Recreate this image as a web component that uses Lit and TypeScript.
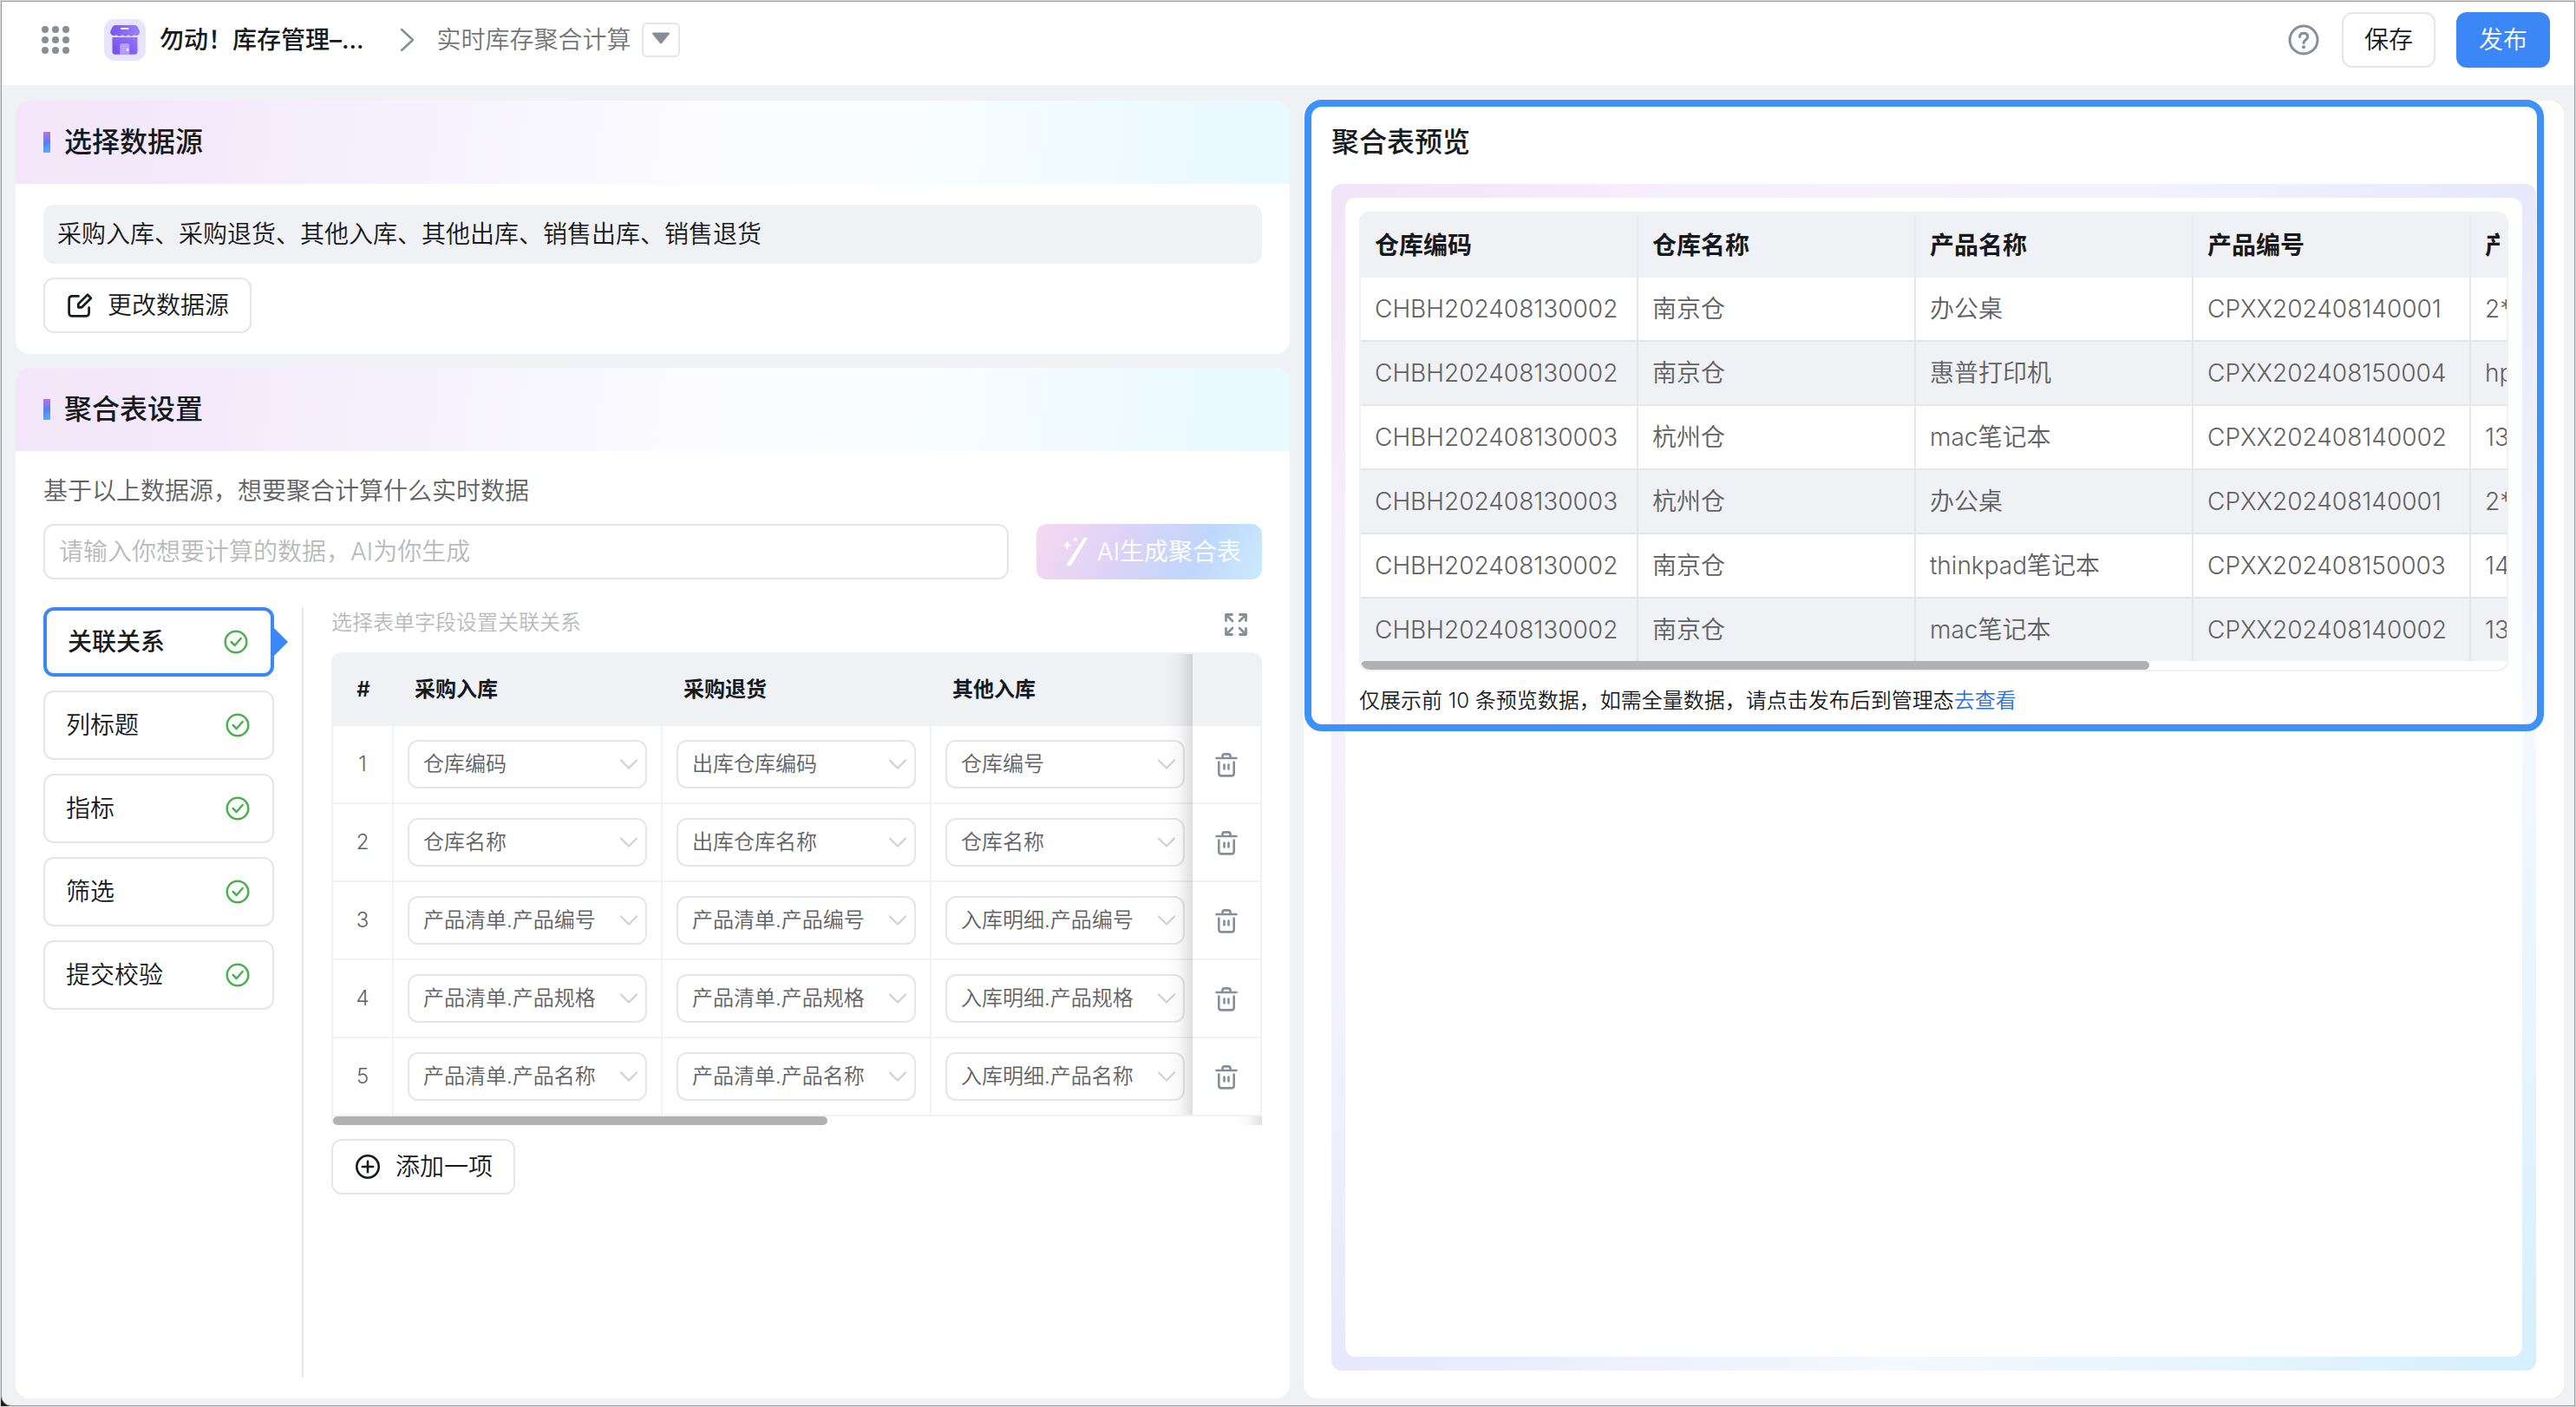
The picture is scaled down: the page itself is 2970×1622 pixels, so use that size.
import { LitElement, html, css, svg } from "lit";
import { customElement, state } from "lit/decorators.js";
import { classMap } from "lit/directives/class-map.js";

const SOURCES = ["采购入库", "采购退货", "其他入库"];

const RELATIONS: string[][] = [
  ["仓库编码", "出库仓库编码", "仓库编号"],
  ["仓库名称", "出库仓库名称", "仓库名称"],
  ["产品清单.产品编号", "产品清单.产品编号", "入库明细.产品编号"],
  ["产品清单.产品规格", "产品清单.产品规格", "入库明细.产品规格"],
  ["产品清单.产品名称", "产品清单.产品名称", "入库明细.产品名称"],
];

const STEPS = ["关联关系", "列标题", "指标", "筛选", "提交校验"];

const PREVIEW_HEAD = ["仓库编码", "仓库名称", "产品名称", "产品编号", "产"];

const PREVIEW_ROWS: string[][] = [
  ["CHBH202408130002", "南京仓", "办公桌", "CPXX202408140001", "2*"],
  ["CHBH202408130002", "南京仓", "惠普打印机", "CPXX202408150004", "hp"],
  ["CHBH202408130003", "杭州仓", "mac笔记本", "CPXX202408140002", "13"],
  ["CHBH202408130003", "杭州仓", "办公桌", "CPXX202408140001", "2*"],
  ["CHBH202408130002", "南京仓", "thinkpad笔记本", "CPXX202408150003", "14"],
  ["CHBH202408130002", "南京仓", "mac笔记本", "CPXX202408140002", "13"],
];

const shared = css`
  * {
    box-sizing: border-box;
  }
  button,
  select,
  input {
    font: inherit;
    color: inherit;
    margin: 0;
  }
  button {
    cursor: pointer;
  }
  svg {
    display: block;
    flex: none;
  }
  h2 {
    margin: 0;
    font-size: 32px;
    line-height: 48px;
    font-weight: 500;
  }
  table {
    border-collapse: separate;
    border-spacing: 0;
    table-layout: fixed;
    width: 100%;
  }
  .btn {
    display: inline-flex;
    align-items: center;
    justify-content: center;
    height: 64px;
    padding: 0 24px;
    border: 2px solid #e6e6e6;
    border-radius: 12px;
    background: #fff;
    font-size: 28px;
    line-height: 40px;
    color: #171a1d;
    white-space: nowrap;
  }
  .icon-btn {
    display: inline-flex;
    padding: 0;
    border: 0;
    background: none;
    vertical-align: middle;
  }
`;

const gridIcon = html`<svg width="32" height="32" viewBox="0 0 32 32" fill="#878f96" aria-hidden="true">
  ${[4, 16, 28].map((y) => [4, 16, 28].map((x) => svg`<circle cx=${x} cy=${y} r="4"></circle>`))}
</svg>`;

const storeIcon = html`<svg width="48" height="48" viewBox="0 0 48 48" aria-hidden="true">
  <defs>
    <linearGradient id="awning" x1="0" y1="0" x2="1" y2="0">
      <stop offset="0" stop-color="#7a55f2"></stop>
      <stop offset="1" stop-color="#9a80fa"></stop>
    </linearGradient>
    <linearGradient id="wall" x1="1" y1="0" x2="0" y2="1">
      <stop offset="0" stop-color="#9479f8"></stop>
      <stop offset="1" stop-color="#7349ee"></stop>
    </linearGradient>
  </defs>
  <rect width="48" height="48" rx="12" fill="#e7e4fc"></rect>
  <path d="M9.500 21H38.500V37.500Q38.500 40.700 35 40.700H13Q9.500 40.700 9.500 37.500Z" fill="url(#wall)"></path>
  <path
    d="M13 7H35.500Q37.500 7 38.500 8.800L40.800 13.500Q42 16 39.800 18Q37.500 20 34.700 18.200Q31.200 21.400 28 18.200Q24.500 21.400 21 18.200Q17.500 21.400 14 18.200Q11 20.200 8.500 18Q6.300 16 7.500 13.500L9.800 8.800Q10.800 7 13 7Z"
    fill="url(#awning)"
  ></path>
  <path
    d="M10 19.800Q12 20.600 14 19Q17.500 22.200 21 19Q24.500 22.200 28 19Q31.200 22.200 34.700 19Q36.500 20.600 38.500 19.800"
    fill="none" stroke="#d9d0fd" stroke-width="1"
  ></path>
  <rect x="19.300" y="10" width="9" height="2" rx="0.500" fill="#fff"></rect>
  <path d="M18.300 40.700V31Q18.300 28 21.300 28H26.300Q29.300 28 29.300 31V40.700Z" fill="#b3a0fb"></path>
  <rect x="26.300" y="33.500" width="1.700" height="3.500" rx="0.800" fill="#fff"></rect>
</svg>`;

const editIcon = html`<svg width="32" height="32" viewBox="0 0 32 32" fill="none" stroke="#171a1d" stroke-width="2.700" stroke-linejoin="round" stroke-linecap="round" aria-hidden="true">
  <path d="M14.500 5.400H7.500Q3.600 5.400 3.600 9.300V24.500Q3.600 28.400 7.500 28.400H22.500Q26.600 28.400 26.600 24.500V18.500"></path>
  <path d="M25 3.800L28.900 7.700L18.300 18.300H14.300V14.400Z"></path>
</svg>`;

const plusIcon = html`<svg width="32" height="32" viewBox="0 0 32 32" fill="none" stroke="#171a1d" stroke-width="2.600" stroke-linecap="round" aria-hidden="true">
  <circle cx="16" cy="16" r="12.700"></circle>
  <path d="M16 9.800V22.200M9.800 16H22.200"></path>
</svg>`;

const checkIcon = html`<svg width="32" height="32" viewBox="0 0 32 32" fill="none" stroke="#4caf50" stroke-width="2.500" stroke-linecap="round" stroke-linejoin="round" aria-hidden="true">
  <circle cx="16" cy="16" r="12.300"></circle>
  <path d="M10.700 16L14.700 20L21.700 12"></path>
</svg>`;

const wandIcon = html`<svg width="36" height="36" viewBox="0 -1 36 36" fill="#fff" aria-hidden="true">
  <path d="M8.800 31.500L28.300 1.500Q28.800 0.700 29.800 0.700H31.500Q33 0.700 32.200 2.200L14.400 32Q13.800 33 12.600 33H10Q7.800 33 8.800 31.500Z"></path>
  <path d="M9.500 4.300Q10.400 8.700 14.800 9.600Q10.400 10.500 9.500 14.900Q8.600 10.500 4.200 9.600Q8.600 8.700 9.500 4.300Z"></path>
  <path d="M19 0Q19.500 2.500 22 3Q19.500 3.500 19 6Q18.500 3.500 16 3Q18.500 2.500 19 0Z"></path>
</svg>`;

const expandIcon = html`<svg width="32" height="32" viewBox="0 0 32 32" fill="none" stroke="#878f96" stroke-width="2.800" stroke-linecap="round" stroke-linejoin="round" aria-hidden="true">
  <path d="M11.500 4.500H4.500V11.500M4.500 4.500L12 12M20.500 4.500H27.500V11.500M27.500 4.500L20 12M4.500 20.500V27.500H11.500M4.500 27.500L12 20M27.500 20.500V27.500H20.500M27.500 27.500L20 20"></path>
</svg>`;

const trashIcon = html`<svg width="32" height="32" viewBox="0 0 32 32" fill="none" stroke="#878f96" stroke-width="2.600" stroke-linecap="round" stroke-linejoin="round" aria-hidden="true">
  <path d="M4.500 8H27.500M11.500 8V5.600Q11.500 3.400 13.700 3.400H18.300Q20.500 3.400 20.500 5.600V8"></path>
  <path d="M7.300 12.500V25.500Q7.300 28.400 10.200 28.400H21.800Q24.700 28.400 24.700 25.500V12.500M13.500 15.500V20.500M18.500 15.500V20.500"></path>
</svg>`;

const helpIcon = html`<svg width="40" height="40" viewBox="-2 -2 40 40" fill="none" stroke="#878f96" stroke-width="3" stroke-linecap="round" aria-hidden="true">
  <circle cx="18" cy="18" r="16"></circle>
  <path d="M13.500 14.500Q13.500 10.300 18 10.300Q22.700 10.300 22.700 14.300Q22.700 16.300 20.300 18Q18 19.600 18 21.500"></path>
  <circle cx="18" cy="26.300" r="2" fill="#878f96" stroke="none"></circle>
</svg>`;

@customElement("top-bar")
class TopBar extends LitElement {
  static styles = [
    shared,
    css`
      :host {
        display: block;
        background: #fff;
      }
      .bar {
        display: flex;
        align-items: center;
        justify-content: space-between;
        height: 96px;
        padding: 0 28px 8px 46px;
      }
      .crumbs,
      .actions {
        display: flex;
        align-items: center;
      }
      .logo {
        margin: 0 16px 0 40px;
      }
      .app-name {
        font-size: 28px;
        line-height: 40px;
        font-weight: 500;
        color: #171a1d;
      }
      .arrow {
        margin: 0 24px 0 40px;
      }
      .page-name {
        font-size: 28px;
        line-height: 40px;
        color: #747677;
      }
      .menu {
        display: inline-flex;
        align-items: center;
        justify-content: center;
        width: 44px;
        height: 40px;
        margin-left: 12px;
        padding: 0 0 4px;
        border: 2px solid #e6e6e6;
        border-radius: 6px;
        background: #fff;
      }
      .actions {
        gap: 24px;
      }
      .primary {
        border-color: #3c87f7;
        background: #3c87f7;
        color: #fff;
      }
    `,
  ];

  render() {
    return html`<header class="bar">
      <div class="crumbs">
        <button class="icon-btn" aria-label="应用">${gridIcon}</button>
        <span class="logo">${storeIcon}</span>
        <span class="app-name">勿动！库存管理–…</span>
        <svg class="arrow" width="20" height="28" viewBox="0 0 20 28" fill="none" stroke="#878f96" stroke-width="2.500" stroke-linecap="round" stroke-linejoin="round" aria-hidden="true">
          <path d="M3 2L16 14L3 26"></path>
        </svg>
        <span class="page-name">实时库存聚合计算</span>
        <button class="menu" aria-label="切换">
          <svg width="22" height="14" viewBox="0 0 22 14" aria-hidden="true">
            <path d="M2.500 0.500H19.500Q22 0.500 20.500 2.600L12.500 12.500Q11 14 9.500 12.500L1.500 2.600Q0 0.500 2.500 0.500Z" fill="#878f96"></path>
          </svg>
        </button>
      </div>
      <div class="actions">
        <button class="icon-btn" aria-label="帮助">${helpIcon}</button>
        <button class="btn">保存</button>
        <button class="btn primary">发布</button>
      </div>
    </header>`;
  }
}

@customElement("relation-table")
class RelationTable extends LitElement {
  static styles = [
    shared,
    css`
      :host {
        display: block;
      }
      .wrap {
        position: relative;
        border-left: 2px solid #f0f1f4;
        border-radius: 12px 12px 0 0;
        overflow: hidden;
      }
      .c-index {
        width: 70px;
      }
      .c-source {
        width: 310px;
      }
      .c-action {
        width: 80px;
      }
      th {
        height: 85px;
        padding: 0 24px;
        background: #f0f1f4;
        font-size: 24px;
        line-height: 36px;
        font-weight: 600;
        text-align: left;
        color: #171a1d;
      }
      th.index {
        padding: 0;
        text-align: center;
      }
      td {
        height: 90px;
        padding: 0 0 0 16px;
        border-right: 2px solid #f1f2f3;
        border-bottom: 2px solid #f1f2f3;
        font-size: 24px;
        line-height: 36px;
        color: #5f6163;
      }
      td.last {
        border-right: 0;
      }
      td.index,
      td.action {
        padding: 0;
        text-align: center;
      }
      .picker {
        display: grid;
        align-items: center;
        width: 276px;
      }
      .picker > * {
        grid-area: 1 / 1;
      }
      .picker svg {
        justify-self: end;
        margin-right: 10px;
        pointer-events: none;
      }
      select {
        appearance: none;
        width: 100%;
        height: 56px;
        padding: 0 40px 0 16px;
        border: 2px solid #e6e6e6;
        border-radius: 12px;
        background: #fff;
      }
      .shade {
        position: absolute;
        top: 2px;
        bottom: 12px;
        right: 80px;
        width: 30px;
        background: linear-gradient(90deg, transparent, rgba(0, 0, 0, 0.03) 50%, rgba(0, 0, 0, 0.13));
        pointer-events: none;
      }
      .track {
        display: flex;
        justify-content: space-between;
        height: 10px;
      }
      .thumb {
        width: 53.2%;
        border-radius: 5px;
        background: #b1b1b1;
      }
      .track-end {
        width: 30px;
        background: linear-gradient(90deg, transparent, rgba(0, 0, 0, 0.03) 50%, rgba(0, 0, 0, 0.13));
      }
    `,
  ];

  render() {
    return html`<div class="wrap">
      <table>
        <colgroup>
          <col class="c-index" />
          <col class="c-source" />
          <col class="c-source" />
          <col />
          <col class="c-action" />
        </colgroup>
        <thead>
          <tr>
            <th class="index">#</th>
            ${SOURCES.map((s) => html`<th>${s}</th>`)}
            <th></th>
          </tr>
        </thead>
        <tbody>
          ${RELATIONS.map(
            (row, i) => html`<tr>
              <td class="index">${i + 1}</td>
              ${row.map(
                (value, c) => html`<td class=${classMap({ last: c === row.length - 1 })}>
                  <div class="picker">
                    <select aria-label=${`${SOURCES[c]} ${i + 1}`}>
                      <option>${value}</option>
                    </select>
                    <svg width="22" height="14" viewBox="0 0 22 14" fill="none" stroke="#cfd1d4" stroke-width="2.200" stroke-linecap="round" stroke-linejoin="round" aria-hidden="true">
                      <path d="M2 2.500L11 11.500L20 2.500"></path>
                    </svg>
                  </div>
                </td>`
              )}
              <td class="action">
                <button class="icon-btn" aria-label=${`删除 ${i + 1}`}>${trashIcon}</button>
              </td>
            </tr>`
          )}
        </tbody>
      </table>
      <div class="track">
        <div class="thumb"></div>
        <div class="track-end"></div>
      </div>
      <div class="shade"></div>
    </div>`;
  }
}

@customElement("preview-table")
class PreviewTable extends LitElement {
  static styles = [
    shared,
    css`
      :host {
        display: block;
      }
      .wrap {
        border: 2px solid #f0f1f4;
        border-radius: 12px;
        overflow: hidden;
      }
      .c-main {
        width: 320px;
      }
      th,
      td {
        padding: 0 16px;
        border-right: 2px solid #e5e6e8;
        font-size: 28px;
        line-height: 40px;
        text-align: left;
        white-space: nowrap;
        overflow: hidden;
      }
      th {
        height: 74px;
        background: #f0f1f4;
        border-color: #ebecf4;
        font-weight: 600;
        color: #171a1d;
      }
      td {
        height: 74px;
        border-bottom: 2px solid #e5e6e8;
        color: #5f6163;
      }
      th:last-child,
      td:last-child {
        padding-right: 0;
        border-right: 0;
        text-overflow: clip;
      }
      th:last-child {
        padding-right: 8px;
      }
      .label {
        overflow: hidden;
      }
      tbody tr:nth-child(even) td {
        background: #f0f1f4;
      }
      tbody tr:last-child td {
        height: 72px;
        border-bottom: 0;
      }
      .track {
        height: 10px;
      }
      .thumb {
        width: 68.8%;
        height: 10px;
        border-radius: 5px;
        background: #b1b1b1;
      }
    `,
  ];

  render() {
    return html`<div class="wrap">
      <table>
        <colgroup>
          ${[1, 2, 3, 4].map(() => html`<col class="c-main" />`)}
          <col />
        </colgroup>
        <thead>
          <tr>
            ${PREVIEW_HEAD.map((h) => html`<th><div class="label">${h}</div></th>`)}
          </tr>
        </thead>
        <tbody>
          ${PREVIEW_ROWS.map((r) => html`<tr>${r.map((v) => html`<td>${v}</td>`)}</tr>`)}
        </tbody>
      </table>
      <div class="track"><div class="thumb"></div></div>
    </div>`;
  }
}

@customElement("app-root")
class AppRoot extends LitElement {
  @state() private step = 0;

  static styles = [
    shared,
    css`
      :host {
        box-sizing: border-box;
        display: flex;
        min-height: 100vh;
        border: 1px solid #dadada;
        background: #1b1b1b;
        font-family: Inter, "Noto Sans CJK SC", sans-serif;
        font-size: 28px;
        font-weight: 350;
        color: #171a1d;
      }
      .app {
        flex: 1;
        min-width: 0;
        display: flex;
        flex-direction: column;
        border: 1px solid #9b9b9b;
        border-bottom-left-radius: 12px;
        background: #f0f1f4;
        overflow: hidden;
      }
      .content {
        flex: 1;
        display: grid;
        grid-template-columns: minmax(0, 1469fr) minmax(0, 1453fr);
        gap: 16px;
        padding: 18px 12px 8px 16px;
      }
      .left {
        display: flex;
        flex-direction: column;
        gap: 16px;
      }
      .card {
        border-radius: 16px;
        background: #fff;
      }
      .card-head {
        display: flex;
        align-items: center;
        gap: 16px;
        height: 96px;
        padding: 0 32px;
        border-radius: 16px 16px 0 0;
        background: linear-gradient(96deg, #f3e6f8 0%, #f4eafb 16%, #f6f3fe 34%, #fafafe 50%, #fafdff 68%, #e8f9ff 97%);
      }
      .mark {
        width: 8px;
        height: 24px;
        background: linear-gradient(160deg, #c86de0, #5580f2 50%, #4fb4fb);
      }
      .card-body {
        display: flex;
        flex-direction: column;
        align-items: flex-start;
        padding: 24px 32px;
      }
      .grow {
        flex: 1;
        display: flex;
        flex-direction: column;
      }
      .grow .card-body {
        flex: 1;
        align-items: stretch;
      }
      .sources {
        width: 100%;
        margin-bottom: 16px;
        padding: 14px 16px;
        border-radius: 12px;
        background: #f0f1f4;
        line-height: 40px;
      }
      .with-icon {
        gap: 16px;
      }
      .ask {
        margin: 2px 0 18px;
        line-height: 40px;
        color: #5f6163;
      }
      .ask-row {
        display: flex;
        gap: 32px;
        margin-bottom: 32px;
      }
      .prompt {
        flex: 1;
        min-width: 0;
        height: 64px;
        padding: 0 16px;
        border: 2px solid #e6e6e6;
        border-radius: 12px;
        background: #fff;
      }
      .prompt::placeholder {
        color: #b9babb;
        opacity: 1;
      }
      .ai {
        gap: 8px;
        padding: 0 24px 0 26px;
        border: 0;
        background: linear-gradient(118deg, #f3d8f1 5%, #ddd3f7 38%, #bfd6fb 70%, #cbe9fd 97%);
        color: #fff;
      }
      .editor {
        flex: 1;
        display: flex;
      }
      .steps {
        display: flex;
        flex-direction: column;
        gap: 16px;
        width: 266px;
      }
      .step {
        position: relative;
        display: flex;
        align-items: center;
        justify-content: space-between;
        height: 80px;
        padding: 0 24px;
        border: 2px solid #e6e6e6;
        border-radius: 12px;
        background: #fff;
        font-size: 28px;
        line-height: 40px;
      }
      .step.on {
        border: 4px solid #3c87f7;
        font-weight: 500;
      }
      .step.on::after {
        content: "";
        position: absolute;
        left: 100%;
        top: 50%;
        margin: -16px 0 0 4px;
        border-left: 16px solid #3c87f7;
        border-top: 16px solid transparent;
        border-bottom: 16px solid transparent;
      }
      .detail {
        flex: 1;
        min-width: 0;
        margin-left: 32px;
        padding-left: 32px;
        border-left: 2px solid #e6e6e6;
      }
      .detail-head {
        display: flex;
        align-items: flex-start;
        justify-content: space-between;
        height: 52px;
        padding-right: 14px;
        font-size: 24px;
        line-height: 36px;
        color: #b9babb;
      }
      .detail-head .icon-btn {
        margin-top: 4px;
      }
      .add {
        margin-top: 16px;
      }
      .preview {
        position: relative;
        display: flex;
        flex-direction: column;
        padding: 0 32px 32px;
      }
      .preview h2 {
        padding: 24px 0;
      }
      .frame {
        flex: 1;
        display: flex;
        padding: 16px;
        border-radius: 12px;
        background: linear-gradient(135deg, #f2e4f7 0%, #f6f0fc 17%, #f3f2fe 34%, #e7e8fb 50%, #f4f8ff 73%, #e4f4fd 88%, #d4effc 100%);
      }
      .sheet {
        flex: 1;
        min-width: 0;
        padding: 16px;
        border-radius: 12px;
        background: #fff;
      }
      .note {
        margin: 16px 0 0;
        font-size: 24px;
        line-height: 36px;
      }
      .note a {
        color: #2d6fdc;
        text-decoration: none;
      }
      .highlight {
        position: absolute;
        inset: -1px 23px auto 1px;
        height: 728px;
        border: 8px solid #3d92f9;
        border-radius: 20px;
        pointer-events: none;
      }
    `,
  ];

  render() {
    return html`<div class="app">
      <top-bar></top-bar>
      <main class="content">
        <div class="left">
          <section class="card">
            <div class="card-head"><span class="mark"></span><h2>选择数据源</h2></div>
            <div class="card-body">
              <div class="sources">采购入库、采购退货、其他入库、其他出库、销售出库、销售退货</div>
              <button class="btn with-icon">${editIcon}更改数据源</button>
            </div>
          </section>
          <section class="card grow">
            <div class="card-head"><span class="mark"></span><h2>聚合表设置</h2></div>
            <div class="card-body">
              <label class="ask" for="prompt">基于以上数据源，想要聚合计算什么实时数据</label>
              <div class="ask-row">
                <input class="prompt" id="prompt" type="text" placeholder="请输入你想要计算的数据，AI为你生成" />
                <button class="btn ai">${wandIcon}AI生成聚合表</button>
              </div>
              <div class="editor">
                <nav class="steps">
                  ${STEPS.map(
                    (name, i) => html`<button
                      class=${classMap({ step: true, on: i === this.step })}
                      @click=${() => (this.step = i)}
                    >
                      ${name}${checkIcon}
                    </button>`
                  )}
                </nav>
                <div class="detail">
                  <div class="detail-head">
                    选择表单字段设置关联关系
                    <button class="icon-btn" aria-label="全屏">${expandIcon}</button>
                  </div>
                  <relation-table></relation-table>
                  <button class="btn with-icon add">${plusIcon}添加一项</button>
                </div>
              </div>
            </div>
          </section>
        </div>
        <section class="card preview">
          <h2>聚合表预览</h2>
          <div class="frame">
            <div class="sheet">
              <preview-table></preview-table>
              <p class="note">仅展示前 10 条预览数据，如需全量数据，请点击发布后到管理态<a href="#view">去查看</a></p>
            </div>
          </div>
          <div class="highlight"></div>
        </section>
      </main>
    </div>`;
  }
}
